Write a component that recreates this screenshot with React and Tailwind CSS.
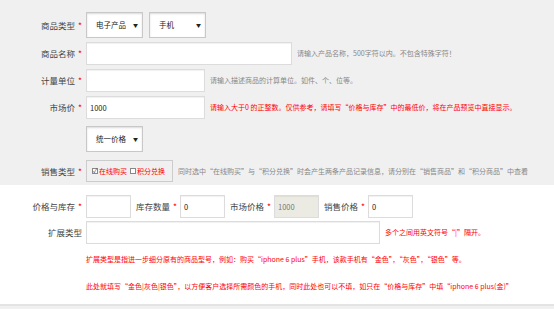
import React from "react";

const font = { fontFamily: '"Noto Sans CJK SC", "Liberation Sans", sans-serif' };

function Star() {
  return <span className="text-[#ff0000] ml-[3px]">*</span>;
}

function Label({ children, star = true }) {
  return (
    <div className="w-[86px] shrink-0 text-right pr-[4px] text-[8.5px] text-[#444]">
      {children}
      {star && <Star />}
    </div>
  );
}

function FakeSelect({ text }) {
  return (
    <div className="w-[57px] h-[26px] bg-white border border-[#c8c8c8] shadow-[inset_0_1px_2px_rgba(0,0,0,0.15)] flex items-center justify-between pl-[9px] pr-[4px] text-[7.5px] text-[#222]">
      <span>{text}</span>
      <span className="text-[5px]">▼</span>
    </div>
  );
}

function Input({ w, value = "", disabled = false }) {
  return (
    <div
      className={`h-[23px] border border-[#dcdcdc] shadow-[inset_0_1px_1px_rgba(0,0,0,0.06)] flex items-center px-[3px] text-[7.5px] ${
        disabled ? "bg-[#ebebe4] text-[#777]" : "bg-white text-[#222]"
      } ${w}`}
    >
      {value}
    </div>
  );
}

function Hint({ children, red = false }) {
  return (
    <span className={`ml-[5px] text-[7px] ${red ? "text-[#ff0000]" : "text-[#888]"}`}>
      {children}
    </span>
  );
}

function CheckBox({ checked }) {
  return (
    <span className="inline-flex w-[6px] h-[6px] border border-[#888] bg-white items-center justify-center text-[6px] leading-none text-[#333] mr-[1px]">
      {checked ? "✓" : ""}
    </span>
  );
}

function InlineLabel({ children }) {
  return (
    <span className="ml-[5px] mr-[3px] text-[8.5px] text-[#444]">
      {children}
      <Star />
    </span>
  );
}

export default function App() {
  return (
    <div className="w-[554px] h-[309px] bg-[#f0f0f0] overflow-hidden" style={font}>
      {/* top section */}
      <div className="pt-[12px] flex flex-col">
        <div className="flex items-center h-[26px]">
          <Label>商品类型</Label>
          <FakeSelect text="电子产品" />
          <div className="w-[6px]" />
          <FakeSelect text="手机" />
        </div>
        <div className="flex items-center h-[23px] mt-[4px]">
          <Label>商品名称</Label>
          <Input w="w-[206px]" />
          <Hint>请输入产品名称，500字符以内。不包含特殊字符！</Hint>
        </div>
        <div className="flex items-center h-[23px] mt-[4px]">
          <Label>计量单位</Label>
          <Input w="w-[119px]" />
          <Hint>请输入描述商品的计算单位。如件、个、位等。</Hint>
        </div>
        <div className="flex items-center h-[23px] mt-[4px]">
          <Label>市场价</Label>
          <Input w="w-[119px]" value="1000" />
          <Hint red>请输入大于0 的正整数。仅供参考，请填写“价格与库存”中的最低价，将在产品预览中直接显示。</Hint>
        </div>
        <div className="flex items-center h-[26px] mt-[7px]">
          <div className="w-[86px] shrink-0" />
          <FakeSelect text="统一价格" />
        </div>
        <div className="flex items-center h-[22px] mt-[8px]">
          <Label>销售类型</Label>
          <div className="h-[22px] w-[87px] border border-[#ccc] flex items-center px-[5px] text-[7px] text-[#ff0000]">
            <CheckBox checked />
            <span>在线购买</span>
            <span className="w-[3px]" />
            <CheckBox />
            <span>积分兑换</span>
          </div>
          <Hint>同时选中“在线购买”与“积分兑换”时会产生两条产品记录信息，请分别在“销售商品”和“积分商品”中查看</Hint>
        </div>
      </div>

      {/* bottom section */}
      <div className="mt-[3px] bg-white h-[121px] pt-[10px] border-b-2 border-[#e4e4e4]">
        <div className="flex items-center h-[23px]">
          <Label>价格与库存</Label>
          <Input w="w-[45px]" />
          <InlineLabel>库存数量</InlineLabel>
          <Input w="w-[45px]" value="0" />
          <InlineLabel>市场价格</InlineLabel>
          <Input w="w-[45px]" value="1000" disabled />
          <InlineLabel>销售价格</InlineLabel>
          <Input w="w-[45px]" value="0" />
        </div>
        <div className="flex items-center h-[23px] mt-[3px]">
          <Label star={false}>扩展类型</Label>
          <Input w="w-[294px]" />
          <Hint red>多个之间用英文符号“|”隔开。</Hint>
        </div>
        <div className="pl-[86px] mt-[10px] text-[7px] text-[#ff0000]">
          扩展类型是指进一步细分原有的商品型号，例如：购买“iphone 6 plus”手机，该款手机有“金色”，“灰色”，“银色”等。
        </div>
        <div className="pl-[86px] mt-[16px] text-[7px] text-[#ff0000]">
          此处就填写“金色|灰色|银色”，以方便客户选择所需颜色的手机，同时此处也可以不填，如只在“价格与库存”中填“iphone 6 plus(金)”
        </div>
      </div>
    </div>
  );
}
